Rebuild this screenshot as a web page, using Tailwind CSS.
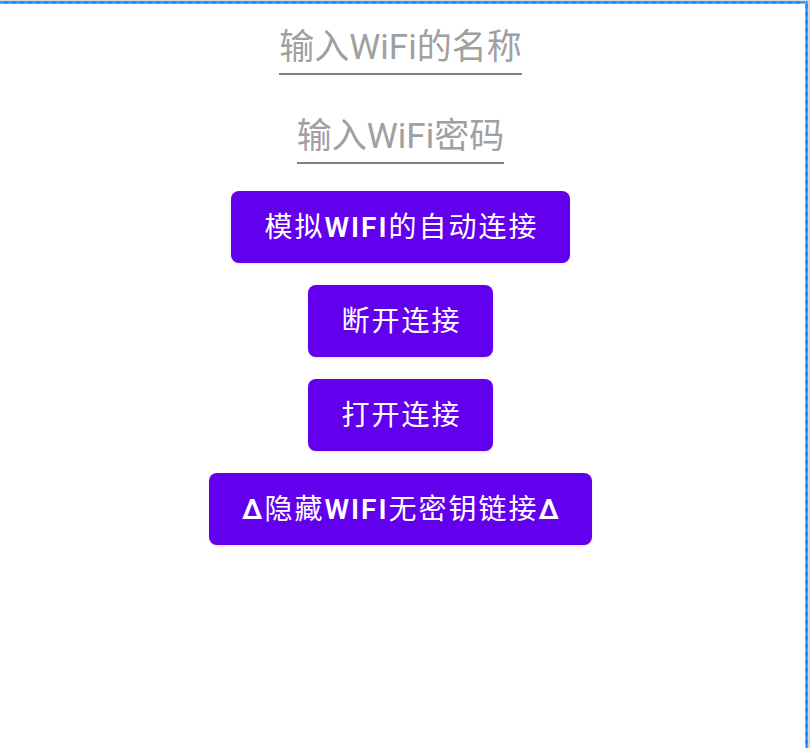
<!DOCTYPE html>
<html lang="zh-CN">
<head>
<meta charset="utf-8">
<meta name="viewport" content="width=device-width, initial-scale=1">
<title>WiFi</title>
<script src="https://cdn.jsdelivr.net/npm/@tailwindcss/browser@4"></script>
</head>
<body class="min-h-screen bg-[#d6d6d6] pt-px pr-[2px] flex font-[Roboto,'Noto_Sans_CJK_SC',sans-serif]">
  <div class="grow flex bg-[#1a88fb] pt-[3px] pr-[3px] relative">
    <div class="absolute inset-x-0 top-0 h-px bg-[repeating-linear-gradient(90deg,#5aa6f5_0_4px,#2a8ffa_4px_8px)]"></div>
    <div class="absolute inset-x-0 top-[2px] h-px bg-[repeating-linear-gradient(90deg,#84c2ff_0_4px,#45a0fb_4px_8px)]"></div>
    <div class="absolute inset-y-0 right-0 w-px bg-[repeating-linear-gradient(0deg,#5aa6f5_0_4px,#2a8ffa_4px_8px)]"></div>
    <div class="absolute inset-y-0 right-[2px] w-px bg-[repeating-linear-gradient(0deg,#84c2ff_0_4px,#45a0fb_4px_8px)]"></div>
    <main class="grow bg-white flex flex-col items-center pt-5 pr-1">
      <form class="flex flex-col items-center gap-[38px]">
        <input type="text" aria-label="输入WiFi的名称" placeholder="输入WiFi的名称" class="field-sizing-content h-[51px] pb-[10px] text-[35px] leading-10 border-b-2 border-[#808080] placeholder:text-[#a0a0a0] outline-none">
        <input type="password" aria-label="输入WiFi密码" placeholder="输入WiFi密码" class="field-sizing-content h-[51px] pb-[10px] text-[35px] leading-10 border-b-2 border-[#808080] placeholder:text-[#a0a0a0] outline-none">
      </form>
      <div class="mt-[27px] flex flex-col items-center gap-[22px] text-[28px] leading-10 font-normal tracking-[2px] text-white">
        <button type="button" class="pl-[33px] pr-[31px] pt-[17px] pb-[15px] rounded-lg bg-[#6200ee] shadow">模拟<span class="font-semibold">WIFI</span>的自动连接</button>
        <button type="button" class="pl-[33px] pr-[31px] pt-[17px] pb-[15px] rounded-lg bg-[#6200ee] shadow">断开连接</button>
        <button type="button" class="pl-[33px] pr-[31px] pt-[17px] pb-[15px] rounded-lg bg-[#6200ee] shadow">打开连接</button>
        <button type="button" class="pl-[33px] pr-[31px] pt-[17px] pb-[15px] rounded-lg bg-[#6200ee] shadow"><span class="font-semibold">∆</span>隐藏<span class="font-semibold">WIFI</span>无密钥链接<span class="font-semibold">∆</span></button>
      </div>
    </main>
  </div>
</body>
</html>
